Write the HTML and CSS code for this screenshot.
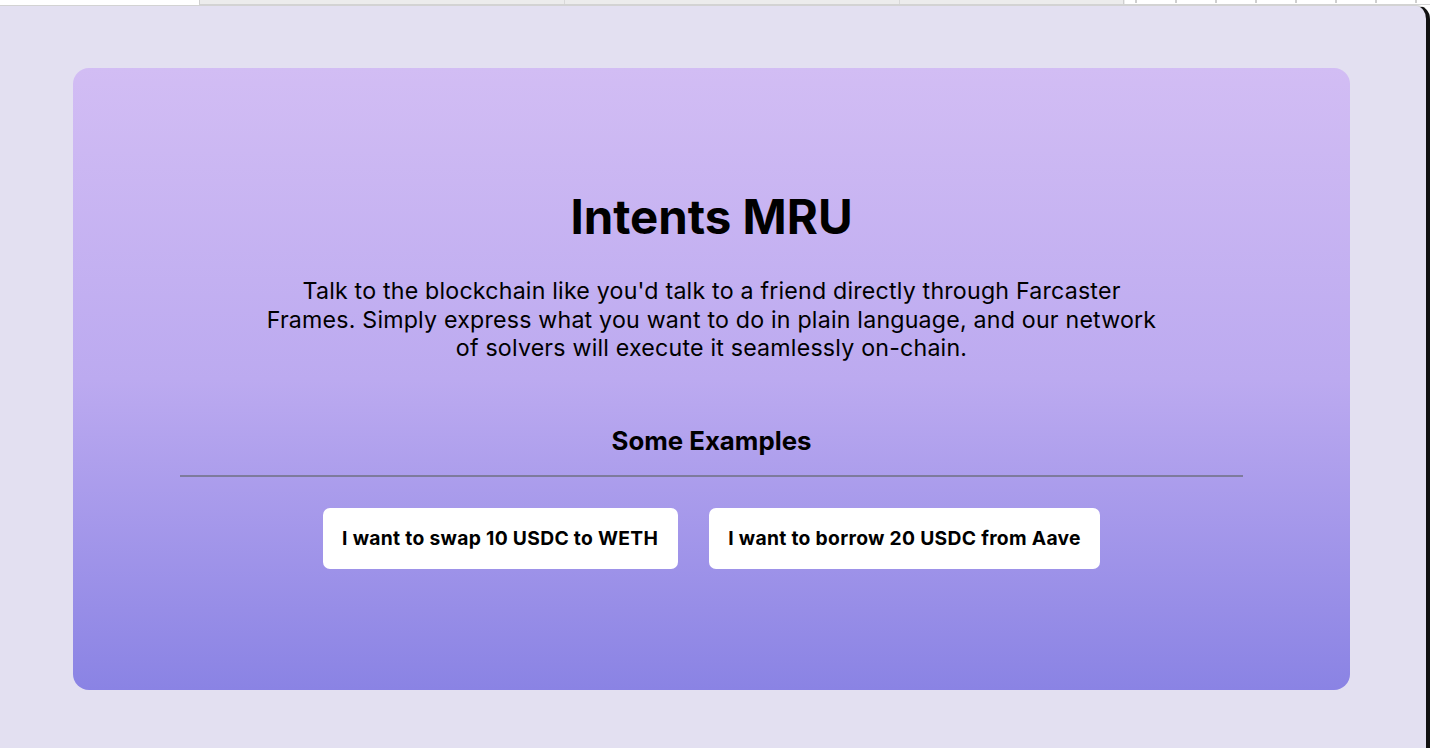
FILE: index.html
```html
<!DOCTYPE html>
<html lang="en">
<head>
<meta charset="utf-8">
<title>Intents MRU</title>
<link rel="stylesheet" href="styles.css">
</head>
<body>
<div class="topstrip">
  <div class="strip-blank"></div>
  <div class="strip-cells">
    <div class="strip-cell c1"></div>
    <div class="strip-cell c2"></div>
    <div class="strip-cell c3"></div>
  </div>
  <div class="strip-ticks">
    <span class="tick"></span><span class="tick"></span><span class="tick"></span><span class="tick"></span>
    <span class="tick"></span><span class="tick"></span><span class="tick"></span><span class="tick"></span>
  </div>
</div>
<div class="panel">
  <section class="card">
    <h1 class="title">Intents MRU</h1>
    <p class="lead">Talk to the blockchain like you'd talk to a friend directly through Farcaster Frames. Simply express what you want to do in plain language, and our network of solvers will execute it seamlessly on-chain.</p>
    <h2 class="subtitle">Some Examples</h2>
    <hr class="divider">
    <div class="examples">
      <button class="example">I want to swap 10 USDC to WETH</button>
      <button class="example">I want to borrow 20 USDC from Aave</button>
    </div>
  </section>
</div>
</body>
</html>
```

FILE: styles.css
```css
* { box-sizing: border-box; }
html, body {
  margin: 0;
  padding: 0;
  background: #ffffff;
  overflow: hidden;
}
body {
  width: 1430px;
  height: 748px;
  font-family: Inter, "Noto Sans", sans-serif;
}
.topstrip {
  display: flex;
  height: 5px;
}
.strip-blank {
  width: 199px;
  flex: none;
}
.strip-cells {
  display: flex;
  width: 926px;
  flex: none;
  background: #ececec;
  border-left: 1px solid #cfcfcf;
  border-bottom: 1px solid #d3d3d3;
}
.strip-cell {
  border-right: 1px solid #d9d9d9;
}
.strip-cell.c1 { width: 365px; }
.strip-cell.c2 { width: 335px; }
.strip-cell.c3 { width: 224px; border-right: 1px solid #d0d0d0; }
.strip-ticks {
  flex: 1;
  display: flex;
  gap: 38px;
  padding-left: 10px;
  border-bottom: 1px solid #d3d3d3;
}
.tick {
  width: 2px;
  height: 3px;
  background: #cfcfcf;
}
.panel {
  width: 1430px;
  height: 743px;
  background: #e3e0f1;
  border-top: 1px solid #d3d3d3;
  border-right: 4px solid #111111;
  border-top-right-radius: 14px;
  padding: 62px 76px 0 73px;
}
.card {
  width: 1277px;
  height: 622px;
  border-radius: 16px;
  background: linear-gradient(180deg, #d2bdf4 0%, #bcaaf0 50%, #8a83e4 100%);
  padding: 122px 107px 0;
  display: flex;
  flex-direction: column;
  align-items: center;
  text-align: center;
  color: #000;
}
.title {
  margin: 0;
  font-size: 47.4px;
  line-height: 54px;
  font-weight: 700;
}
.lead {
  margin: 33px 0 0;
  max-width: 895px;
  font-size: 23.2px;
  line-height: 28.5px;
  font-weight: 400;
  letter-spacing: 0.2px;
}
.subtitle {
  margin: 64px 0 0;
  font-size: 25.8px;
  line-height: 28px;
  font-weight: 700;
}
.divider {
  width: 100%;
  margin: 20px 0 0;
  border: 0;
  height: 2px;
  background: #7e7b9c;
}
.examples {
  display: flex;
  gap: 31px;
  margin-top: 31px;
}
.example {
  height: 61px;
  padding: 0 19.5px;
  border: 0;
  border-radius: 7px;
  background: #ffffff;
  font-family: Inter, "Noto Sans", sans-serif;
  font-size: 19.3px;
  font-weight: 700;
  letter-spacing: 0.3px;
  color: #000;
}
```
